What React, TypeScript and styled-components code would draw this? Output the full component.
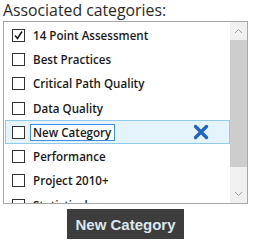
import React from "react";
import styled, { createGlobalStyle } from "styled-components";

const GlobalStyle = createGlobalStyle`
  html, body {
    margin: 0;
    padding: 0;
    background: #ffffff;
  }
  body {
    font-family: "Open Sans", "Noto Sans", Arial, sans-serif;
  }
`;

const categories = [
  { name: "14 Point Assessment", checked: true },
  { name: "Best Practices" },
  { name: "Critical Path Quality" },
  { name: "Data Quality" },
  { name: "New Category", editing: true },
  { name: "Performance" },
  { name: "Project 2010+" },
  { name: "Statistical" },
];

const Panel = styled.div`
  width: 253px;
  height: 244px;
  padding: 0 0 0 3px;
  box-sizing: border-box;
  display: flex;
  flex-direction: column;
`;

const Label = styled.div`
  font-family: "Open Sans", sans-serif;
  font-size: 15.8px;
  line-height: 21px;
  height: 21px;
  color: #2a2a2a;
  white-space: nowrap;
`;

const ListBox = styled.div`
  width: 245px;
  height: 183px;
  box-sizing: border-box;
  border: 1px solid #a8a8a8;
  display: flex;
  overflow: hidden;
`;

const Items = styled.div`
  flex: 1;
  padding-top: 1px;
  overflow: hidden;
`;

const Row = styled.div<{ $selected?: boolean }>`
  height: 24.3px;
  box-sizing: border-box;
  display: flex;
  align-items: center;
  gap: 8px;
  padding-left: 6px;
  margin-left: 1px;
  border: 1px solid ${(p) => (p.$selected ? "#8fcbee" : "transparent")};
  background: ${(p) => (p.$selected ? "#e5f3fb" : "transparent")};
  font-family: "Open Sans", sans-serif;
  font-size: 11.6px;
  font-weight: 600;
  color: #1a1a1a;
  white-space: nowrap;
`;

const Box = styled.span`
  width: 13px;
  height: 13px;
  box-sizing: border-box;
  border: 1px solid #333333;
  background: #ffffff;
  flex: none;
  display: flex;
  align-items: center;
  justify-content: center;
`;

const EditField = styled.span`
  border: 1px solid #3d8ee0;
  background: #ffffff;
  height: 17px;
  line-height: 15px;
  box-sizing: border-box;
  padding: 0 3px 0 2px;
  margin-left: -3px;
`;

const RemoveIcon = styled.svg`
  margin-left: auto;
  margin-right: 20px;
  flex: none;
`;

const ScrollBar = styled.div`
  width: 17px;
  background: #f0f0f0;
  display: flex;
  flex-direction: column;
  flex: none;
`;

const Arrow = styled.div`
  height: 18px;
  display: flex;
  align-items: center;
  justify-content: center;
`;

const Thumb = styled.div`
  height: 127px;
  background: #cdcdcd;
`;

const Track = styled.div`
  flex: 1;
`;

const Footer = styled.div`
  display: flex;
  padding-left: 64px;
  padding-top: 5px;
`;

const ActionButton = styled.div`
  width: 117px;
  height: 30px;
  background: #3d3d3d;
  color: #dce6ee;
  font-family: "Liberation Sans", Arial, sans-serif;
  font-weight: 700;
  font-size: 15px;
  display: flex;
  align-items: center;
  justify-content: center;
`;

const Chevron = ({ up }: { up?: boolean }) => (
  <svg width="9" height="6" viewBox="0 0 9 6">
    <path
      d={up ? "M1 5 L4.5 1.5 L8 5" : "M1 1 L4.5 4.5 L8 1"}
      fill="none"
      stroke="#a0a0a0"
      strokeWidth="1"
    />
  </svg>
);

const App = () => {
  return (
    <>
      <GlobalStyle />
      <Panel>
        <Label>Associated categories:</Label>
        <ListBox>
          <Items>
            {categories.map((c) => (
              <Row key={c.name} $selected={c.editing}>
                <Box>
                  {c.checked && (
                    <svg width="11" height="11" viewBox="0 0 11 11">
                      <path
                        d="M2 5.5 L4.5 8.5 L9 1.5"
                        fill="none"
                        stroke="#1a1a1a"
                        strokeWidth="1.6"
                      />
                    </svg>
                  )}
                </Box>
                {c.editing ? <EditField>{c.name}</EditField> : c.name}
                {c.editing && (
                  <RemoveIcon width="16" height="16" viewBox="0 0 16 16">
                    <path
                      d="M2.5 2.5 L13.5 13.5 M13.5 2.5 L2.5 13.5"
                      stroke="#1f66c1"
                      strokeWidth="3.4"
                      strokeLinecap="round"
                    />
                  </RemoveIcon>
                )}
              </Row>
            ))}
          </Items>
          <ScrollBar>
            <Arrow>
              <Chevron up />
            </Arrow>
            <Thumb />
            <Track />
            <Arrow>
              <Chevron />
            </Arrow>
          </ScrollBar>
        </ListBox>
        <Footer>
          <ActionButton>New Category</ActionButton>
        </Footer>
      </Panel>
    </>
  );
};

export default App;
